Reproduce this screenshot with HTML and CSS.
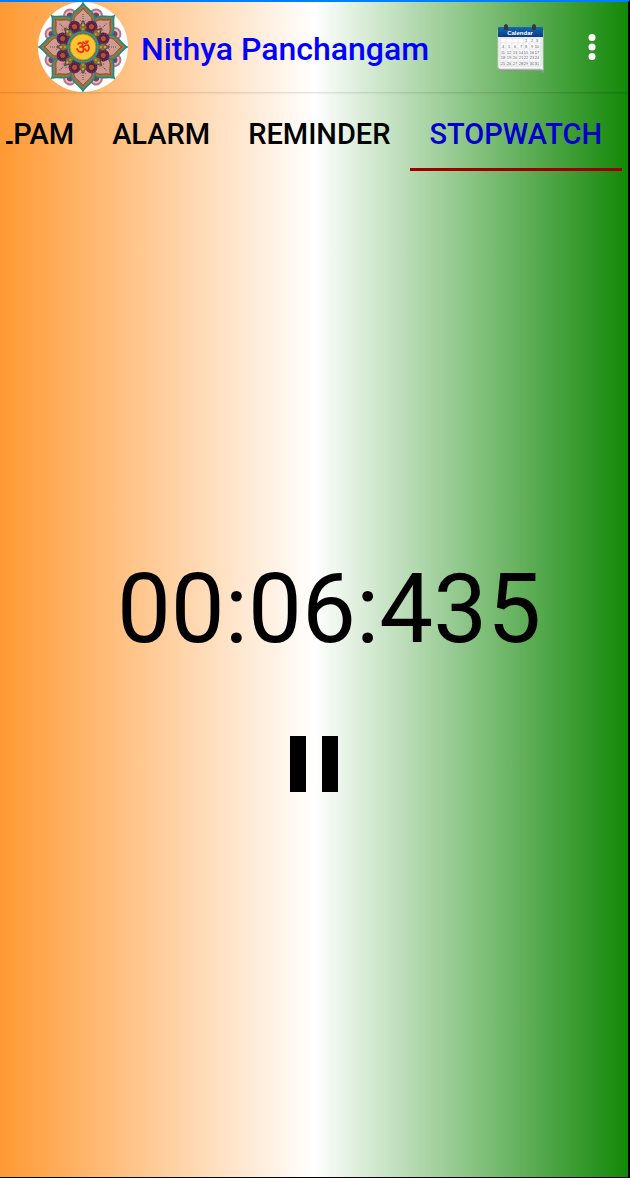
FILE: index.html
```html
<!DOCTYPE html>
<html lang="en">
<head>
<meta charset="utf-8">
<meta name="viewport" content="width=device-width, initial-scale=1">
<title>Nithya Panchangam</title>
<link rel="stylesheet" href="styles.css">
</head>
<body>
<div class="app">
  <header class="toolbar">
    <svg class="logo" viewBox="-45 -45 90 90" role="img" aria-label="Om mandala">
      <defs>
        <g id="outer">
          <circle cx="0" cy="-34" r="7" fill="#b87386"/>
          <circle cx="0" cy="-34" r="5" fill="#e3bcc0"/>
          <circle cx="0" cy="-34" r="3" fill="#803b61"/>
          <circle cx="-5" cy="-31" r="3" fill="#c48a94"/>
          <circle cx="5" cy="-31" r="3" fill="#c48a94"/>
        </g>
        <g id="petal">
          <path d="M0-44 C-3-38-12-35-12-28 L-10-15 H10 L12-28 C12-35 3-38 0-44Z" fill="#a07436" stroke="#158c8c" stroke-width="1.6"/>
          <path d="M0-39 C-2-34-9-32-9-27 C-9-21-5-20 0-17 C5-20 9-21 9-27 C9-32 2-34 0-39Z" fill="#d09b90" stroke="#6f453a" stroke-width=".8"/>
          <path d="M0-33V-25M-3-27L0-24L3-27" fill="none" stroke="#71484f" stroke-width="1" stroke-dasharray="1 1"/>
        </g>
        <g id="flower">
          <circle cx="0" cy="-22" r="6" fill="#33235e"/>
          <circle cx="0" cy="-22" r="5" fill="none" stroke="#a12053" stroke-width="2" stroke-dasharray="1 1"/>
          <circle cx="0" cy="-22" r="3" fill="#c04a35" stroke="#4a3026"/>
        </g>
        <g id="bead">
          <path d="M0-26L-4-20L-2-15H2L4-20Z" fill="#8a6e32" stroke="#363d3d" stroke-width=".8"/>
          <circle cx="0" cy="-22" r="1" fill="#e4b64b"/>
          <circle cx="0" cy="-18" r="1" fill="#b9a445"/>
        </g>
      </defs>
      <circle r="45" fill="#fff"/>
      <use href="#outer" transform="rotate(22.5)"/><use href="#outer" transform="rotate(67.5)"/>
      <use href="#outer" transform="rotate(112.5)"/><use href="#outer" transform="rotate(157.5)"/>
      <use href="#outer" transform="rotate(202.5)"/><use href="#outer" transform="rotate(247.5)"/>
      <use href="#outer" transform="rotate(292.5)"/><use href="#outer" transform="rotate(337.5)"/>
      <use href="#petal" transform="rotate(45)"/><use href="#petal" transform="rotate(135)"/>
      <use href="#petal" transform="rotate(225)"/><use href="#petal" transform="rotate(315)"/>
      <use href="#petal"/><use href="#petal" transform="rotate(90)"/>
      <use href="#petal" transform="rotate(180)"/><use href="#petal" transform="rotate(270)"/>
      <circle r="20" fill="#6b5232"/>
      <use href="#flower" transform="rotate(22.5)"/><use href="#flower" transform="rotate(67.5)"/>
      <use href="#flower" transform="rotate(112.5)"/><use href="#flower" transform="rotate(157.5)"/>
      <use href="#flower" transform="rotate(202.5)"/><use href="#flower" transform="rotate(247.5)"/>
      <use href="#flower" transform="rotate(292.5)"/><use href="#flower" transform="rotate(337.5)"/>
      <use href="#bead"/><use href="#bead" transform="rotate(45)"/>
      <use href="#bead" transform="rotate(90)"/><use href="#bead" transform="rotate(135)"/>
      <use href="#bead" transform="rotate(180)"/><use href="#bead" transform="rotate(225)"/>
      <use href="#bead" transform="rotate(270)"/><use href="#bead" transform="rotate(315)"/>
      <circle r="15" fill="#8c5b29" stroke="#15a0a0" stroke-width="1.6"/>
      <circle r="13" fill="#fac52f" stroke="#c08a2a" stroke-width="1"/>
      <g fill="none" stroke="#f22b18" stroke-width="1.7" stroke-linecap="round" stroke-linejoin="round">
        <path d="M-5-3C-3-5 0-4-.5-2C-1-.5-2 0-3 0C0-.5 1 1 .5 3C0 6-4 6-6 2"/>
        <path d="M0 0C2-1 2-2 4-2C7-2 6 4 4 4C3 4 3 3 2 2"/>
        <path d="M0-5C2-3 4-3 5-6M3-6V-6"/>
      </g>
    </svg>
    <h1 class="title">Nithya Panchangam</h1>
    <button class="icon-button calendar-button" type="button" aria-label="Calendar">
      <svg class="calendar" viewBox="0 0 48 50" aria-hidden="true">
        <defs><linearGradient id="band" x2="0" y2="1"><stop stop-color="#1768b5"/><stop offset="1" stop-color="#073b83"/></linearGradient></defs>
        <path d="M1 42H47V47Q47 49 45 49L43 47H3L1 45Z" fill="#8e9690"/>
        <path d="M1 6H46V46L44 45H3Q1 45 1 43Z" fill="#fff" stroke="#c2ccc5"/>
        <path d="M1 4Q1 3 2 3H45Q46 3 46 4V13H1Z" fill="url(#band)"/>
        <path d="M3 14H44V42H3Z" fill="#fff" stroke="#d5d5d9"/>
        <path d="M3 19H44M3 25H44M3 31H44M3 37H44M9 14V42M15 14V42M21 14V42M27 14V42M33 14V42M39 14V42" stroke="#e7e7ed" stroke-width="1"/>
        <g class="calendar-days">
          <text x="29" y="18">1</text><text x="35" y="18">2</text><text x="40" y="18">3</text>
          <text x="6" y="24">4</text><text x="12" y="24">5</text><text x="18" y="24">6</text><text x="24" y="24">7</text><text x="29" y="24">8</text><text x="35" y="24">9</text><text x="40" y="24">10</text>
          <text x="6" y="30">11</text><text x="12" y="30">12</text><text x="18" y="30">13</text><text x="24" y="30">14</text><text x="29" y="30">15</text><text x="35" y="30">16</text><text x="40" y="30">17</text>
          <text x="6" y="35">18</text><text x="12" y="35">19</text><text x="18" y="35">20</text><text x="24" y="35">21</text><text x="29" y="35">22</text><text x="35" y="35">23</text><text x="40" y="35">24</text>
          <text x="6" y="41">25</text><text x="12" y="41">26</text><text x="18" y="41">27</text><text x="24" y="41">28</text><text x="29" y="41">29</text><text x="35" y="41">30</text><text x="40" y="41">31</text>
        </g>
        <path d="M8 6V2Q9 0 10 2V6M36 6V2Q37 0 38 2V6" fill="none" stroke="#33393d" stroke-width="2"/>
        <text class="calendar-name" x="23" y="11">Calendar</text>
      </svg>
    </button>
    <button class="icon-button menu-button" type="button" aria-label="More options">
      <svg class="dots" viewBox="0 0 8 28" aria-hidden="true"><circle cx="4" cy="4.500" r="3.500"/><circle cx="4" cy="14" r="3.500"/><circle cx="4" cy="23.500" r="3.500"/></svg>
    </button>
  </header>
  <nav class="tabs" aria-label="Sections">
    <a class="tab" href="#lpam">LPAM</a>
    <a class="tab" href="#alarm">ALARM</a>
    <a class="tab" href="#reminder">REMINDER</a>
    <a class="tab tab-active" href="#stopwatch" aria-current="page">STOPWATCH</a>
  </nav>
  <main class="stopwatch" id="stopwatch">
    <div class="time" role="timer">00:06:435</div>
    <button class="pause" type="button" aria-label="Pause">
      <svg class="pause-icon" viewBox="0 0 48 56" aria-hidden="true"><path d="M0 0H16V56H0ZM32 0H48V56H32Z"/></svg>
    </button>
  </main>
</div>
</body>
</html>
```
FILE: styles.css
```css
* {
  box-sizing: border-box;
}

body {
  margin: 0;
  background: #000;
  font-family: Roboto, "Liberation Sans", sans-serif;
}

.app {
  display: flex;
  flex-direction: column;
  min-height: 100vh;
  border-top: 2px solid #007fff;
  border-right: 2px solid #000;
  border-bottom: 1px solid #000;
  background: linear-gradient(to right, #ff9933, #fff 50%, #138808) padding-box;
}

.toolbar {
  display: flex;
  align-items: center;
  padding: 0 18px 0 38px;
  box-shadow: 0 1px 2px rgba(0, 0, 0, 0.15);
}

.logo {
  flex: none;
  width: 90px;
  height: 90px;
}

.title {
  flex: 1;
  margin: 0;
  padding: 4px 0 0 13px;
  font-size: 32px;
  font-weight: 500;
  line-height: 40px;
  white-space: nowrap;
  color: #00f;
}

.icon-button,
.pause {
  display: flex;
  align-items: center;
  justify-content: center;
  padding: 0;
  border: 0;
  background: transparent;
  cursor: pointer;
}

.calendar-button {
  width: 96px;
  height: 90px;
  padding: 3px 0 0 2px;
}

.menu-button {
  width: 36px;
  height: 90px;
  margin-left: 6px;
}

.calendar {
  width: 48px;
  height: 50px;
}

.calendar-name {
  fill: #fff;
  font-size: 6px;
  font-weight: 700;
  text-anchor: middle;
}

.calendar-days {
  fill: #555;
  font-size: 4px;
  text-anchor: middle;
}

.dots {
  width: 8px;
  height: 28px;
  fill: #fff;
}

.tabs {
  display: flex;
  justify-content: flex-end;
  margin: 0 6px;
  overflow: hidden;
}

.tab {
  flex: none;
  padding: 22px 19px 14px;
  border-bottom: 3px solid transparent;
  font-size: 29px;
  font-weight: 500;
  line-height: 40px;
  color: #000;
  text-decoration: none;
}

.tab-active {
  padding-right: 20px;
  padding-left: 20px;
  border-bottom-color: #990000;
  color: #0000cd;
}

.stopwatch {
  display: flex;
  flex: 1;
  flex-direction: column;
  align-items: center;
  justify-content: center;
  gap: 50px;
  padding-top: 15px;
}

.time {
  padding-left: 30px;
  font-size: 96px;
  line-height: 114px;
  color: #000;
}

.pause {
  width: 96px;
  height: 96px;
}

.pause-icon {
  width: 48px;
  height: 56px;
}
```
